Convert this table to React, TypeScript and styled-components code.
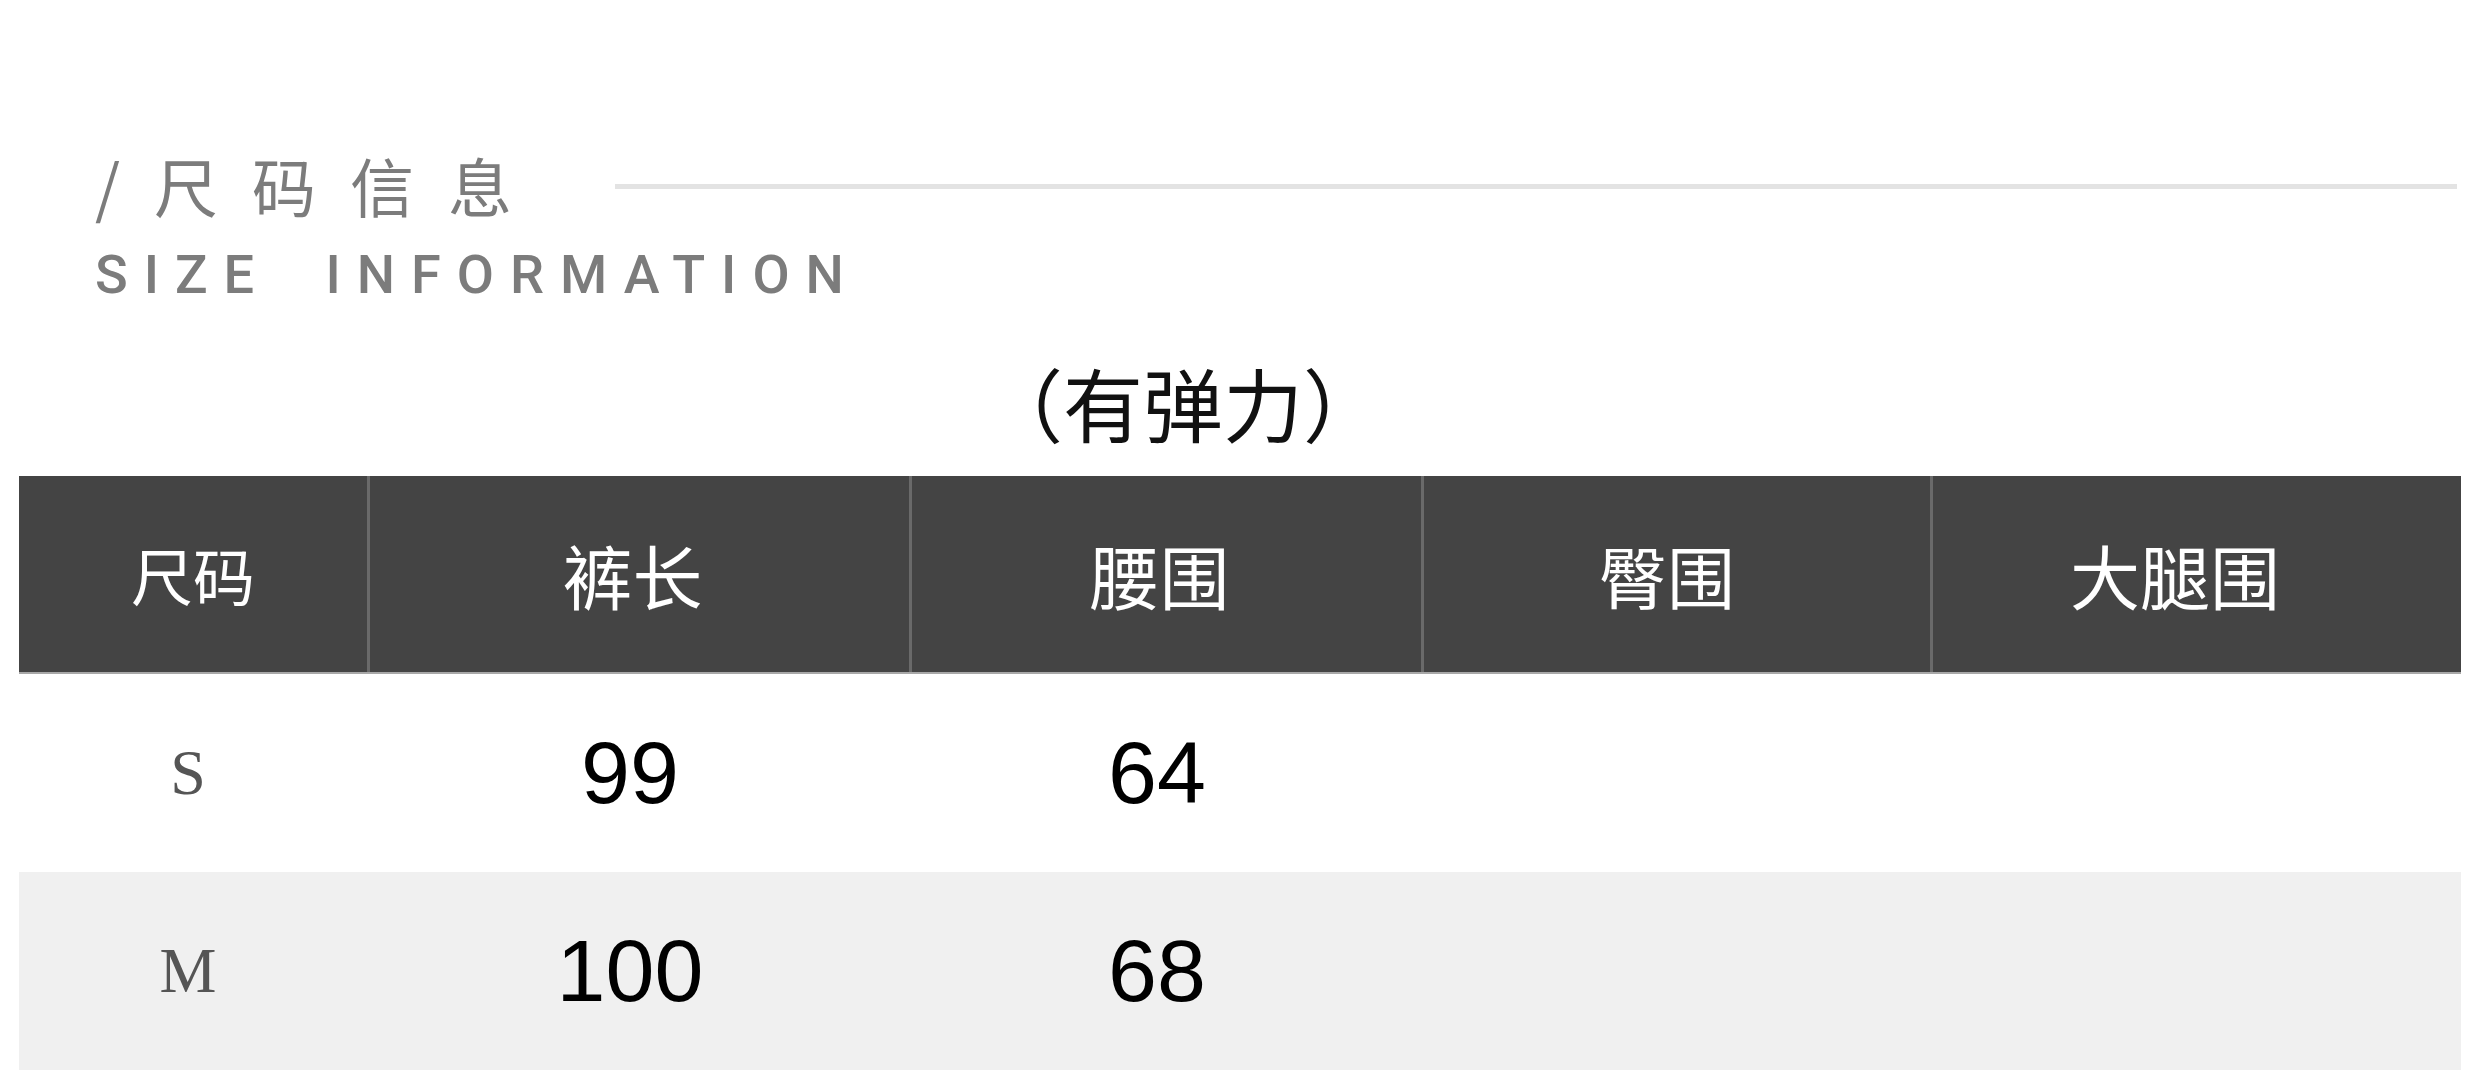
import React, { FC } from 'react';

import styled, { createGlobalStyle } from 'styled-components';

const GlobalStyle = createGlobalStyle`
  html,
  body {
    margin: 0;
    padding: 0;
    background: #ffffff;
  }

  * {
    box-sizing: border-box;
  }
`;

const COLUMNS = '348px 542px 512px 509px 531px';

const Styled = {
  Page: styled.div`
    width: 2480px;
    height: 1084px;
    padding: 152px 19px 0;
    background: #ffffff;
    font-family: 'Noto Sans CJK SC', 'Noto Sans', sans-serif;
  `,
  Heading: styled.div`
    padding-left: 76px;
  `,
  TitleRow: styled.div`
    display: flex;
    align-items: center;
  `,
  Title: styled.h1`
    margin: 0;
    font-size: 64px;
    line-height: 64px;
    font-weight: 400;
    letter-spacing: 34px;
    color: #7c7c7c;
    white-space: nowrap;
  `,
  Rule: styled.span`
    flex: 1;
    height: 5px;
    margin: 4px 4px 0 69px;
    background: #e3e3e3;
  `,
  Subtitle: styled.div`
    margin-top: 31px;
    font-family: Roboto, 'Liberation Sans', sans-serif;
    font-size: 54px;
    line-height: 56px;
    font-weight: 500;
    letter-spacing: 16px;
    word-spacing: 26px;
    color: #7c7c7c;
    white-space: pre;
  `,
  Note: styled.div`
    margin-top: 58px;
    padding-right: 114px;
    text-align: center;
    font-size: 80px;
    line-height: 80px;
    color: #111111;
  `,
  Table: styled.div`
    margin-top: 35px;
  `,
  HeadRow: styled.div`
    display: grid;
    grid-template-columns: ${COLUMNS};
    height: 198px;
    background: #444444;
    border-bottom: 2px solid #a8a8a8;
  `,
  HeadCell: styled.div<{ $first?: boolean; $size?: number; $shift?: number }>`
    display: flex;
    align-items: center;
    justify-content: center;
    padding-right: ${({ $shift }) => $shift || 0}px;
    border-left: ${({ $first }) => ($first ? 'none' : '3px solid #6a6a6a')};
    font-size: ${({ $size }) => $size || 70}px;
    color: #ffffff;
  `,
  Row: styled.div<{ $shaded?: boolean }>`
    display: grid;
    grid-template-columns: ${COLUMNS};
    height: 198px;
    background: ${({ $shaded }) => ($shaded ? '#f0f0f0' : '#ffffff')};
  `,
  SizeCell: styled.div`
    display: flex;
    align-items: center;
    justify-content: center;
    padding-right: 10px;
    font-family: 'Liberation Serif', serif;
    font-size: 64px;
    color: #555555;
  `,
  ValueCell: styled.div`
    display: flex;
    align-items: center;
    justify-content: center;
    padding-right: 16px;
    font-family: 'Liberation Sans', Arial, sans-serif;
    font-size: 88px;
    color: #000000;
  `,
};

const HEADERS = [
  { title: '尺码', size: 62, shift: 0 },
  { title: '裤长', size: 70, shift: 14 },
  { title: '腰围', size: 70, shift: 14 },
  { title: '臀围', size: 68, shift: 20 },
  { title: '大腿围', size: 70, shift: 44 },
];

const ROWS = [
  { size: 'S', values: ['99', '64', '', ''] },
  { size: 'M', values: ['100', '68', '', ''] },
];

const App: FC = () => {
  return (
    <>
      <GlobalStyle />
      <Styled.Page>
        <Styled.Heading>
          <Styled.TitleRow>
            <Styled.Title>/尺码信息</Styled.Title>
            <Styled.Rule />
          </Styled.TitleRow>
          <Styled.Subtitle>SIZE INFORMATION</Styled.Subtitle>
        </Styled.Heading>

        <Styled.Note>（有弹力）</Styled.Note>

        <Styled.Table>
          <Styled.HeadRow>
            {HEADERS.map(({ title, size, shift }, index) => (
              <Styled.HeadCell key={title} $first={index === 0} $size={size} $shift={shift}>
                {title}
              </Styled.HeadCell>
            ))}
          </Styled.HeadRow>

          {ROWS.map((row, index) => (
            <Styled.Row key={row.size} $shaded={index % 2 === 1}>
              <Styled.SizeCell>{row.size}</Styled.SizeCell>
              {row.values.map((value, i) => (
                <Styled.ValueCell key={i}>{value}</Styled.ValueCell>
              ))}
            </Styled.Row>
          ))}
        </Styled.Table>
      </Styled.Page>
    </>
  );
};

export default App;
